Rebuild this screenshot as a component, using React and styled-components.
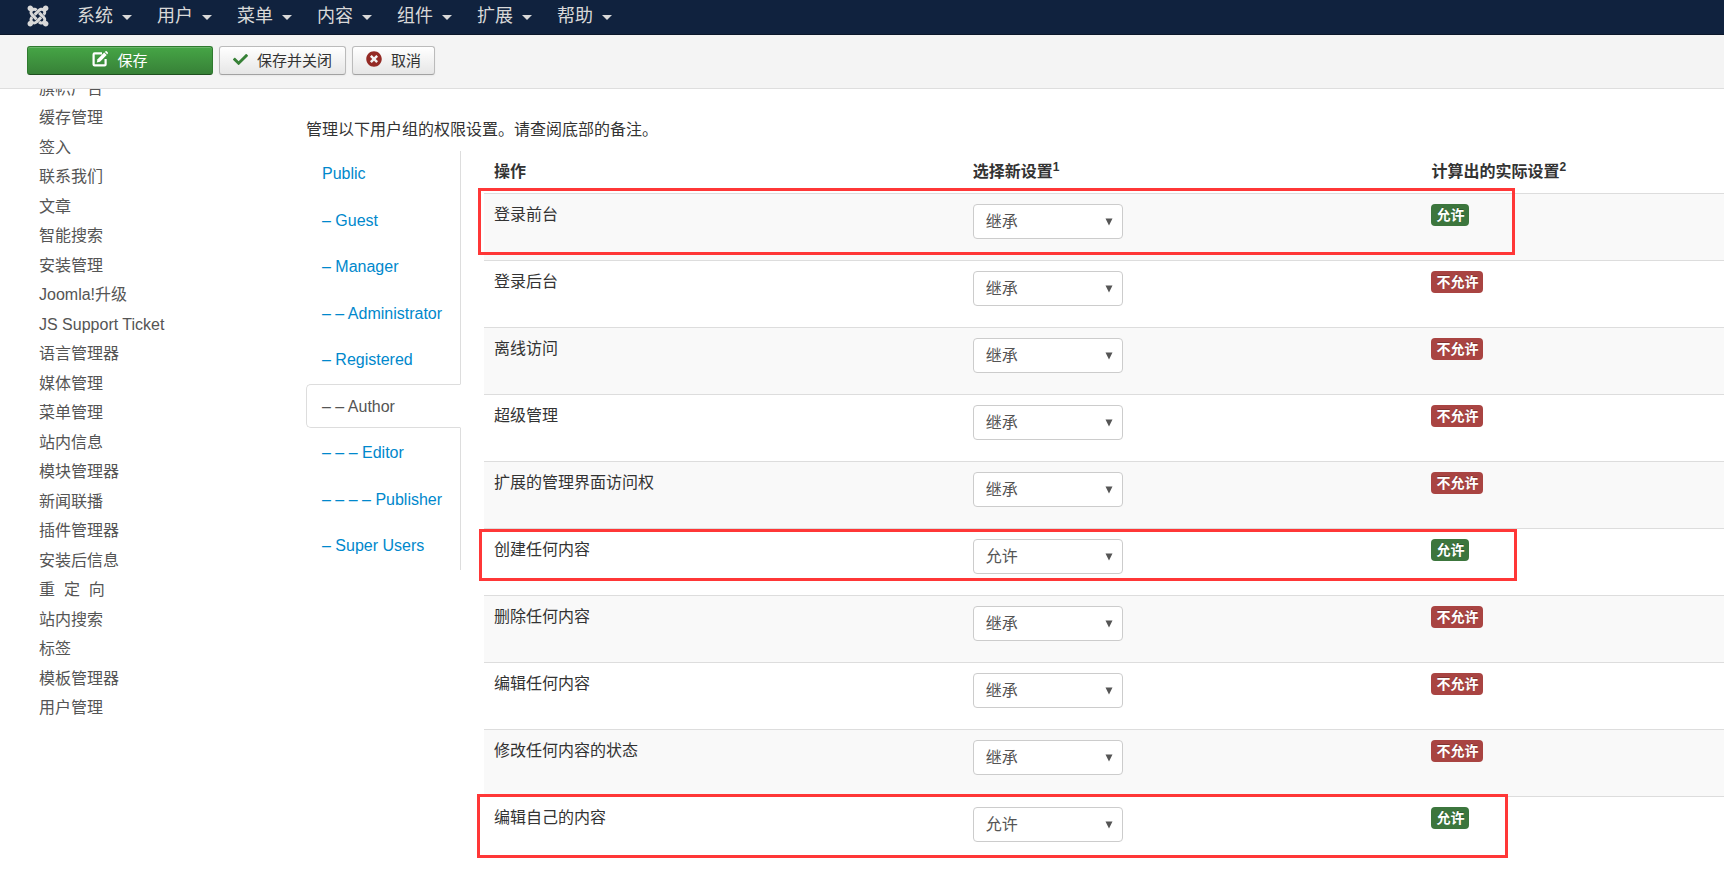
import React, { useState } from 'react';
import styled, { createGlobalStyle } from 'styled-components';
import { FaCheck, FaJoomla, FaTimesCircle } from 'react-icons/fa';

const GlobalStyle = createGlobalStyle`
  * {
    box-sizing: border-box;
  }

  body {
    margin: 0;
    background: #ffffff;
    color: #333333;
    font-family: 'Liberation Sans', 'Noto Sans CJK SC', sans-serif;
    font-size: 16px;
    font-weight: 400;
    line-height: 22px;
  }

  button,
  select {
    font-family: inherit;
    font-weight: inherit;
  }
`;

const Navbar = styled.nav`
  display: flex;
  align-items: center;
  gap: 27px;
  height: 35px;
  padding: 0 26px 3px;
  background: #10223e;
  border-bottom: 1px solid #0b172a;
`;

const Brand = styled.a`
  display: flex;
  color: #d9d9d9;
`;

const Menu = styled.ul`
  display: flex;
  gap: 25px;
  margin: 0;
  padding: 0;
  list-style: none;
`;

const MenuLink = styled.a`
  display: flex;
  align-items: center;
  gap: 9px;
  color: #d9d9d9;
  font-size: 18px;
  text-decoration: none;

  &::after {
    content: '';
    margin-top: 4px;
    border-top: 5px solid #d9d9d9;
    border-left: 5px solid transparent;
    border-right: 5px solid transparent;
  }

  &:hover {
    color: #ffffff;
  }
`;

const Toolbar = styled.div`
  display: flex;
  gap: 6px;
  padding: 11px 27px 13px;
  background: #f4f4f4;
  border-bottom: 1px solid #dedede;
`;

const ToolButton = styled.button`
  display: flex;
  align-items: center;
  justify-content: center;
  gap: 9px;
  height: 29px;
  padding: 0 13px 3px;
  border: 1px solid #bbbbbb;
  border-bottom-color: #a2a2a2;
  border-radius: 3px;
  background: linear-gradient(#ffffff, #e6e6e6);
  box-shadow: 0 1px 2px rgba(0, 0, 0, 0.05);
  color: #333333;
  font-size: 15px;
  cursor: pointer;

  svg {
    color: ${(props) => props.$iconColor};
  }
`;

const SaveButton = styled(ToolButton)`
  width: 186px;
  border-color: #2f7a2f;
  border-bottom-color: #1f4f1f;
  background: linear-gradient(#46a546, #378137);
  box-shadow: inset 0 1px 0 rgba(255, 255, 255, 0.2);
  color: #ffffff;
`;

const Page = styled.div`
  display: flex;
  overflow: hidden;
`;

const Sidebar = styled.aside`
  flex: 0 0 306px;
  padding-left: 39px;
`;

/* scrolled a little, so the first entry is tucked under the toolbar */
const SideList = styled.ul`
  display: grid;
  grid-auto-rows: 1fr;
  align-items: center;
  height: 649px;
  margin: -15px 0 0;
  padding: 0;
  list-style: none;
`;

const SideLink = styled.a`
  color: #555555;
  text-decoration: none;
  white-space: pre;
`;

const Main = styled.main`
  flex: 1;
  min-width: 0;
  padding-top: 30px;
`;

const Intro = styled.p`
  margin: 0 0 10px;
`;

const Permissions = styled.div`
  display: flex;
  align-items: flex-start;
  gap: 23px;
`;

const Groups = styled.ul`
  display: grid;
  grid-auto-rows: 1fr;
  flex: 0 0 155px;
  height: 419px;
  margin: 0;
  padding: 0;
  border-right: 1px solid #dddddd;
  list-style: none;
`;

const GroupTab = styled.a`
  display: block;
  margin-right: ${(props) => (props.$active ? '-1px' : '0')};
  padding: 11px 15px 9px;
  border: 1px solid ${(props) => (props.$active ? '#dddddd' : 'transparent')};
  border-right-color: ${(props) => (props.$active ? '#ffffff' : 'transparent')};
  border-radius: 5px 0 0 5px;
  background: ${(props) => (props.$active ? '#ffffff' : 'transparent')};
  color: ${(props) => (props.$active ? '#555555' : '#0088cc')};
  text-decoration: none;
  white-space: nowrap;
`;

const TableArea = styled.div`
  position: relative;
  flex: 1;
  min-width: 0;
`;

const Table = styled.table`
  width: 100%;
  border-collapse: collapse;
  table-layout: fixed;
`;

const HeadCell = styled.th`
  width: ${(props) => props.$width};
  height: 42px;
  padding: 1px 10px 0;
  text-align: left;
  font-weight: 700;

  sup {
    font-size: 12px;
    line-height: 0;
  }
`;

const Row = styled.tr`
  height: 67px;
  border-top: 1px solid #dddddd;

  &:nth-child(odd) {
    background: #f9f9f9;
  }
`;

const Cell = styled.td`
  padding: 10px 10px 0;
  vertical-align: top;
`;

const SelectBox = styled.div`
  position: relative;
  width: 150px;

  svg {
    position: absolute;
    top: 14px;
    right: 10px;
    pointer-events: none;
  }
`;

const Select = styled.select`
  display: block;
  appearance: none;
  width: 100%;
  height: 35px;
  padding: 0 24px 0 12px;
  border: 1px solid #cccccc;
  border-radius: 4px;
  background: #ffffff;
  color: #555555;
  font-size: 16px;
`;

const Badge = styled.span`
  display: block;
  width: fit-content;
  padding: 0 5px;
  border-radius: 4px;
  background: ${(props) => (props.$allowed ? '#3c763d' : '#a94442')};
  color: #ffffff;
  font-size: 14px;
  font-weight: 700;
  text-shadow: 0 -1px 0 rgba(0, 0, 0, 0.25);
`;

const Marker = styled.div`
  position: absolute;
  top: ${(props) => props.$top}px;
  left: ${(props) => props.$left}px;
  right: ${(props) => props.$right}px;
  height: ${(props) => props.$height}px;
  border: 3px solid #ff3737;
  pointer-events: none;
`;

const menus = ['系统', '用户', '菜单', '内容', '组件', '扩展', '帮助'];

const components = [
  '旗帜广告',
  '缓存管理',
  '签入',
  '联系我们',
  '文章',
  '智能搜索',
  '安装管理',
  'Joomla!升级',
  'JS Support Ticket',
  '语言管理器',
  '媒体管理',
  '菜单管理',
  '站内信息',
  '模块管理器',
  '新闻联播',
  '插件管理器',
  '安装后信息',
  '重  定  向',
  '站内搜索',
  '标签',
  '模板管理器',
  '用户管理',
];

const groups = [
  'Public',
  '– Guest',
  '– Manager',
  '– – Administrator',
  '– Registered',
  '– – Author',
  '– – – Editor',
  '– – – – Publisher',
  '– Super Users',
];

const actions = [
  { name: '登录前台', setting: '继承', allowed: true },
  { name: '登录后台', setting: '继承', allowed: false },
  { name: '离线访问', setting: '继承', allowed: false },
  { name: '超级管理', setting: '继承', allowed: false },
  { name: '扩展的管理界面访问权', setting: '继承', allowed: false },
  { name: '创建任何内容', setting: '允许', allowed: true },
  { name: '删除任何内容', setting: '继承', allowed: false },
  { name: '编辑任何内容', setting: '继承', allowed: false },
  { name: '修改任何内容的状态', setting: '继承', allowed: false },
  { name: '编辑自己的内容', setting: '允许', allowed: true },
];

const EditIcon = () => (
  <svg width='16' height='16' viewBox='0 0 16 16' aria-hidden='true'>
    <path
      d='M10 2.4H2.6a1 1 0 0 0-1 1v10a1 1 0 0 0 1 1h10a1 1 0 0 0 1-1V8'
      fill='none'
      stroke='#ffffff'
      strokeWidth='2.2'
    />
    <path d='M4.8 11.6l.7-3.3L12.2 1.6l2.5 2.5-6.7 6.7z' fill='#ffffff' />
    <path d='M12.9.9l.6-.6a.9.9 0 0 1 1.2 0l1.1 1.1a.9.9 0 0 1 0 1.2l-.6.6z' fill='#ffffff' />
  </svg>
);

const App = () => {
  const [activeGroup, setActiveGroup] = useState('– – Author');

  const selectGroup = (e, group) => {
    e.preventDefault();
    setActiveGroup(group);
  };

  return (
    <>
      <GlobalStyle />
      <Navbar>
        <Brand href='#' aria-label='Joomla'>
          <FaJoomla size={24} />
        </Brand>
        <Menu>
          {menus.map((menu) => (
            <li key={menu}>
              <MenuLink href='#'>{menu}</MenuLink>
            </li>
          ))}
        </Menu>
      </Navbar>

      <Toolbar>
        <SaveButton type='button' $iconColor='#ffffff'>
          <EditIcon />
          保存
        </SaveButton>
        <ToolButton type='button' $iconColor='#378137'>
          <FaCheck size={15} />
          保存并关闭
        </ToolButton>
        <ToolButton type='button' $iconColor='#942a25'>
          <FaTimesCircle size={16} />
          取消
        </ToolButton>
      </Toolbar>

      <Page>
        <Sidebar>
          <SideList>
            {components.map((item) => (
              <li key={item}>
                <SideLink href='#'>{item}</SideLink>
              </li>
            ))}
          </SideList>
        </Sidebar>

        <Main>
          <Intro>管理以下用户组的权限设置。请查阅底部的备注。</Intro>
          <Permissions>
            <Groups>
              {groups.map((group) => (
                <li key={group}>
                  <GroupTab
                    href='#'
                    $active={group === activeGroup}
                    onClick={(e) => selectGroup(e, group)}
                  >
                    {group}
                  </GroupTab>
                </li>
              ))}
            </Groups>

            <TableArea>
              <Table>
                <thead>
                  <tr>
                    <HeadCell $width='38.6%'>操作</HeadCell>
                    <HeadCell $width='37%'>
                      选择新设置<sup>1</sup>
                    </HeadCell>
                    <HeadCell>
                      计算出的实际设置<sup>2</sup>
                    </HeadCell>
                  </tr>
                </thead>
                <tbody>
                  {actions.map((action, i) => (
                    <Row key={action.name}>
                      <Cell>
                        <label htmlFor={`action-${i}`}>{action.name}</label>
                      </Cell>
                      <Cell>
                        <SelectBox>
                          <Select id={`action-${i}`} defaultValue={action.setting}>
                            <option>继承</option>
                            <option>允许</option>
                            <option>拒绝</option>
                          </Select>
                          <svg width='8' height='8' viewBox='0 0 8 8' aria-hidden='true'>
                            <path d='M0.5 0.5h7L4 7.5z' fill='#555555' />
                          </svg>
                        </SelectBox>
                      </Cell>
                      <Cell>
                        <Badge $allowed={action.allowed}>
                          {action.allowed ? '允许' : '不允许'}
                        </Badge>
                      </Cell>
                    </Row>
                  ))}
                </tbody>
              </Table>
              <Marker $top={37} $left={-6} $right={209} $height={67} />
              <Marker $top={378} $left={-5} $right={207} $height={52} />
              <Marker $top={643} $left={-7} $right={216} $height={64} />
            </TableArea>
          </Permissions>
        </Main>
      </Page>
    </>
  );
};

export default App;
